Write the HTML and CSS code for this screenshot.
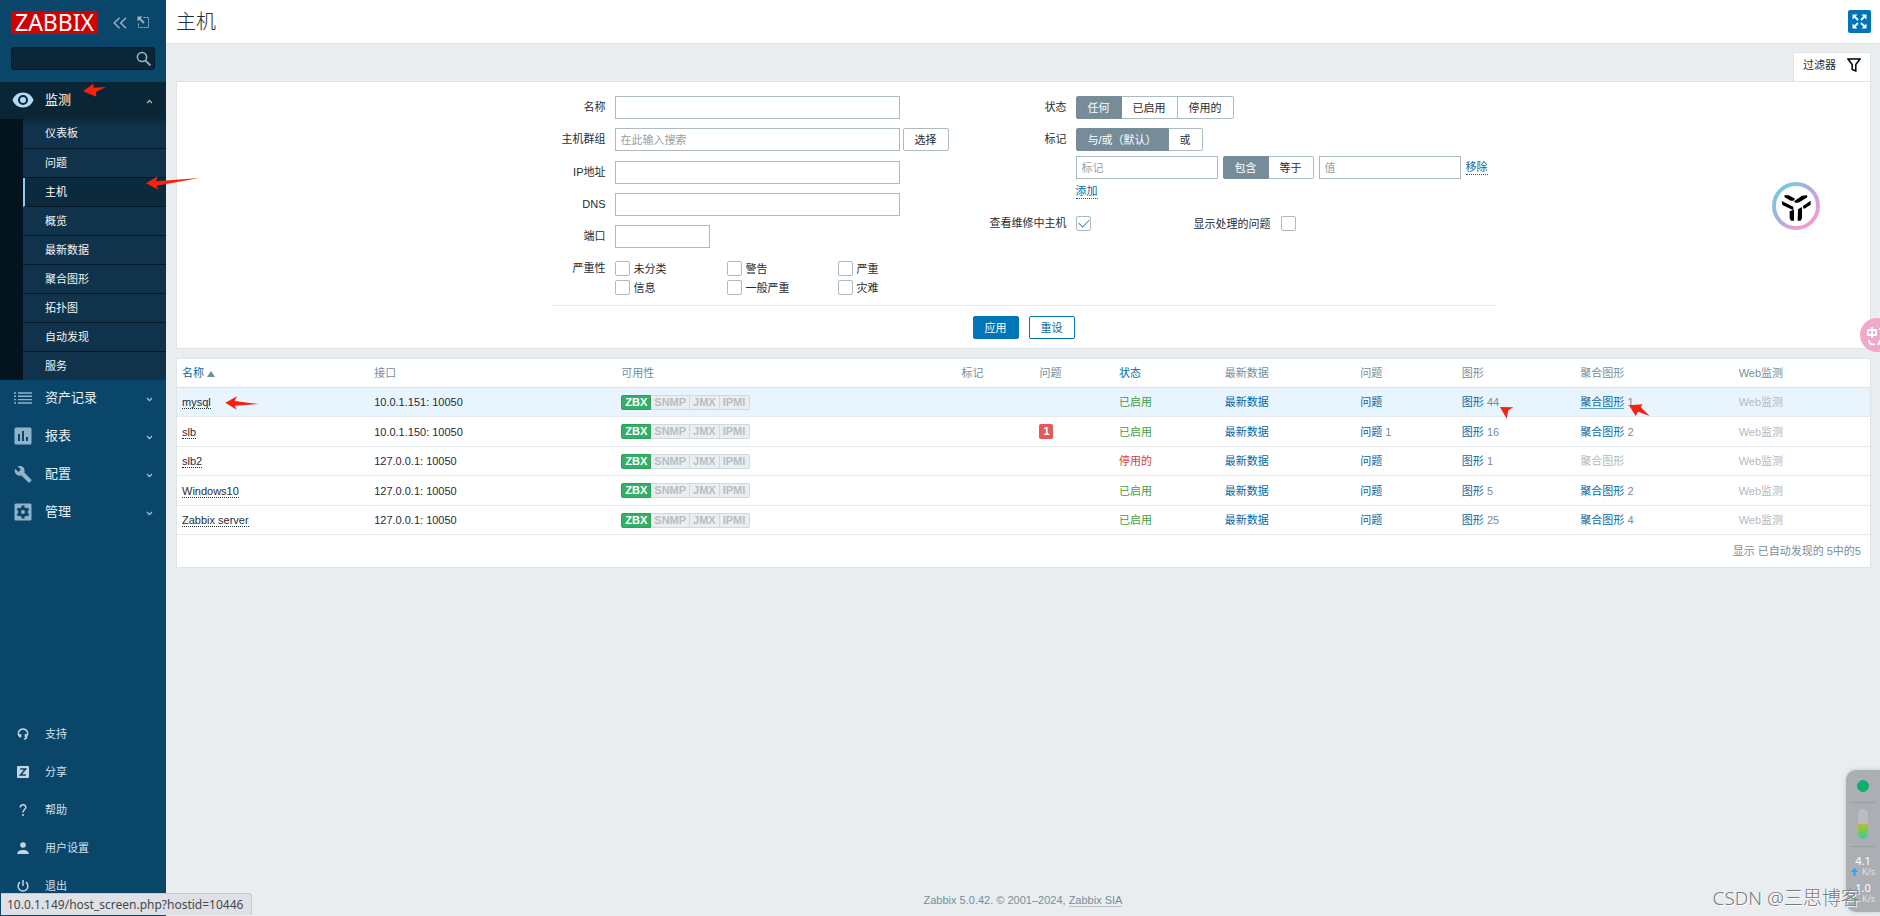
FILE: index.html
```
<!DOCTYPE html>
<html lang="zh-CN">
<head>
<meta charset="utf-8">
<title>主机</title>
<link rel="stylesheet" href="styles.css">
</head>
<body>
<aside class="sidebar">
  <div class="brand">
    <a class="logo" href="#">ZABBIX</a>
    <button class="ghost" type="button" aria-label="折叠"><svg width="14" height="12" viewBox="0 0 14 12" fill="none" stroke="currentColor" stroke-width="1.3"><path d="M6.5 .8 1.2 6l5.3 5.2M13 .8 7.7 6l5.3 5.2"/></svg></button>
    <button class="ghost" type="button" aria-label="隐藏"><svg width="13" height="13" viewBox="0 0 13 13" fill="none" stroke="currentColor"><path d="M6.500 1.500h5v10h-10v-5" stroke-dasharray="2 1"/><path d="M2 2l5 5" stroke-width="1.800"/><path d="M.5.5h5l-5 5z" fill="currentColor" stroke="none"/></svg></button>
  </div>
  <form class="search">
    <input type="text" aria-label="搜索">
    <button type="button" aria-label="搜索"><svg width="15" height="15" viewBox="0 0 15 15" fill="none" stroke="currentColor"><circle cx="6" cy="6" r="4.600" stroke-width="1.500"/><path d="m9.300 9.300 5 5" stroke-width="1.800"/></svg></button>
  </form>
  <nav class="menu">
    <a class="item open" href="#"><span class="icon"><svg width="22" height="16" viewBox="0 0 22 16"><path fill="currentColor" fill-rule="evenodd" d="M11 .500C6 .500 2 3.500.500 8 2 12.500 6 15.500 11 15.500S20 12.500 21.500 8C20 3.500 16 .500 11 .500zM11 13a5 5 0 1 1 0-10 5 5 0 0 1 0 10zm0-2a3 3 0 1 0 0-6 3 3 0 0 0 0 6z"/></svg></span><span class="text">监测</span><svg class="chev" width="7" height="5" viewBox="0 0 7 5"><path d="M1 4.200 3.500 1.500 6 4.200" fill="none" stroke="currentColor" stroke-width="1.200"/></svg></a>
    <div class="sub">
      <a href="#">仪表板</a><a href="#">问题</a><a class="current" href="#">主机</a><a href="#">概览</a><a href="#">最新数据</a><a href="#">聚合图形</a><a href="#">拓扑图</a><a href="#">自动发现</a><a href="#">服务</a>
    </div>
    <a class="item" href="#"><span class="icon"><svg width="18" height="12" viewBox="0 0 18 12" stroke="currentColor" stroke-width="1.400"><path d="M4 1h14M4 4.300h14M4 7.600h14M4 11h14M0 1h2M0 4.300h2M0 7.600h2M0 11h2"/></svg></span><span class="text">资产记录</span><svg class="chev" width="7" height="5" viewBox="0 0 7 5"><path d="M1 1 3.500 3.700 6 1" fill="none" stroke="currentColor" stroke-width="1.200"/></svg></a>
    <a class="item" href="#"><span class="icon"><svg width="18" height="18" viewBox="0 0 18 18"><path fill="currentColor" fill-rule="evenodd" d="M2 .500h14a1.500 1.500 0 0 1 1.500 1.500v14a1.500 1.500 0 0 1-1.500 1.500H2A1.500 1.500 0 0 1 .500 16V2A1.500 1.500 0 0 1 2 .500zM4 7v7h2V7zm4-3v10h2V4zm4 6v4h2v-4z"/></svg></span><span class="text">报表</span><svg class="chev" width="7" height="5" viewBox="0 0 7 5"><path d="M1 1 3.500 3.700 6 1" fill="none" stroke="currentColor" stroke-width="1.200"/></svg></a>
    <a class="item" href="#"><span class="icon"><svg width="18" height="18" viewBox="0 0 24 24"><path fill="currentColor" d="m23.200 19.500-9.400-9.400c.9-2.400.4-5.100-1.500-7C10.300 1.100 7.200.7 4.800 1.800L9.100 6.100 6 9.200 1.600 4.900C.4 7.300.9 10.400 2.900 12.400c1.900 1.900 4.600 2.400 7 1.500l9.400 9.300c.4.4 1 .4 1.400 0l2.400-2.300c.5-.4.5-1.100.1-1.400z"/></svg></span><span class="text">配置</span><svg class="chev" width="7" height="5" viewBox="0 0 7 5"><path d="M1 1 3.500 3.700 6 1" fill="none" stroke="currentColor" stroke-width="1.200"/></svg></a>
    <a class="item" href="#"><span class="icon"><svg width="18" height="18" viewBox="0 0 18 18"><rect x=".5" y=".5" width="17" height="17" rx="1.500" fill="currentColor"/><g fill="#0a466a"><circle cx="9" cy="9" r="4.800"/><path d="M7.500 2.500h3v13h-3zM2.700 7l1.500-2.600 11.100 6.500-1.500 2.600zM13.800 4.400 15.300 7 4.200 13.500 2.700 10.900z"/></g><circle cx="9" cy="9" r="2" fill="currentColor"/></svg></span><span class="text">管理</span><svg class="chev" width="7" height="5" viewBox="0 0 7 5"><path d="M1 1 3.500 3.700 6 1" fill="none" stroke="currentColor" stroke-width="1.200"/></svg></a>
  </nav>
  <nav class="menu lower">
    <a class="item" href="#"><span class="icon"><svg width="12" height="12" viewBox="0 0 12 12" fill="none" stroke="currentColor" stroke-width="1.400"><path d="M2.500 8.500C.5 6.500.9 1 6 1s5.500 5.500 3.500 7.500M9.500 8v2L7 11.300"/><path d="M3.300 6v3.500M8.700 6v3.500" stroke-width="2"/></svg></span><span class="text">支持</span></a>
    <a class="item" href="#"><span class="icon"><svg width="12" height="12" viewBox="0 0 12 12"><rect width="12" height="12" rx="1" fill="currentColor"/><path d="M3.200 3h5.400L3.500 9h5.400" fill="none" stroke="#0a466a" stroke-width="1.600"/></svg></span><span class="text">分享</span></a>
    <a class="item" href="#"><span class="icon"><svg width="8" height="12" viewBox="0 0 8 12" fill="none" stroke="currentColor" stroke-width="1.500"><path d="M1.200 3.500C1.200 0 6.800 0 6.800 3.300 6.800 5.500 4 5.500 4 8.500M4 10v2"/></svg></span><span class="text">帮助</span></a>
    <a class="item" href="#"><span class="icon"><svg width="12" height="12" viewBox="0 0 12 12" fill="currentColor"><circle cx="6" cy="3" r="2.800"/><path d="M.3 12C.3 9 2.500 8 6 8s5.700 1 5.700 4z"/></svg></span><span class="text">用户设置</span></a>
    <a class="item" href="#"><span class="icon"><svg width="12" height="12" viewBox="0 0 12 12" fill="none" stroke="currentColor" stroke-width="1.500"><path d="M6 0v6M3 2.200a4.900 4.900 0 1 0 6 0"/></svg></span><span class="text">退出</span></a>
  </nav>
</aside>

<div class="page">
  <header class="top">
    <h1>主机</h1>
    <button class="full" type="button" aria-label="全屏"><svg width="15" height="15" viewBox="0 0 15 15" fill="#fff" stroke="#fff"><path stroke="none" d="M.5.5h5l-5 5zM14.500.5v5l-5-5zM.5 14.500v-5l5 5zM14.500 14.500h-5l5-5z"/><path stroke-width="1.800" d="m2 2 4 4M13 2 9 6M2 13l4-4M13 13 9 9"/></svg></button>
  </header>
  <main>
    <div class="tabs"><button class="tab" type="button">过滤器<svg width="14" height="14" viewBox="0 0 14 14" fill="none" stroke="#000" stroke-width="1.500"><path d="M1 1h12L8.800 6.500V13L5.200 11.500v-5z"/></svg></button></div>
    <form class="panel filter">
      <div class="cols">
        <div class="left">
          <label for="f-name">名称</label><div><input id="f-name" class="wide" type="text"></div>
          <label for="f-group">主机群组</label><div class="pair"><input id="f-group" class="wide" type="text" placeholder="在此输入搜索"><button class="plain" type="button">选择</button></div>
          <label for="f-ip">IP地址</label><div><input id="f-ip" class="wide" type="text"></div>
          <label for="f-dns">DNS</label><div><input id="f-dns" class="wide" type="text"></div>
          <label for="f-port">端口</label><div><input id="f-port" class="short" type="text"></div>
          <span class="caption">严重性</span>
          <div class="severity">
            <label><input type="checkbox">未分类</label><label><input type="checkbox">警告</label><label><input type="checkbox">严重</label>
            <label><input type="checkbox">信息</label><label><input type="checkbox">一般严重</label><label><input type="checkbox">灾难</label>
          </div>
        </div>
        <div class="right">
          <span class="caption">状态</span>
          <div class="seg"><label><input type="radio" name="status" checked><span>任何</span></label><label><input type="radio" name="status"><span>已启用</span></label><label><input type="radio" name="status"><span>停用的</span></label></div>
          <span class="caption">标记</span>
          <div class="tags">
            <div class="seg"><label><input type="radio" name="evaltype" checked><span>与/或（默认）</span></label><label><input type="radio" name="evaltype"><span>或</span></label></div>
            <div class="tagrow"><input class="tag" type="text" placeholder="标记" aria-label="标记"><div class="seg"><label><input type="radio" name="op" checked><span>包含</span></label><label><input type="radio" name="op"><span>等于</span></label></div><input class="tag" type="text" placeholder="值" aria-label="值"><a class="dotted" href="#">移除</a></div>
            <div><a class="dotted" href="#">添加</a></div>
          </div>
          <label for="f-maint">查看维修中主机</label>
          <div class="checks"><input id="f-maint" type="checkbox" checked><label for="f-supp">显示处理的问题</label><input id="f-supp" type="checkbox"></div>
        </div>
      </div>
      <div class="actions"><button class="primary" type="button">应用</button><button class="outline" type="button">重设</button></div>
    </form>

    <section class="panel list">
      <table>
        <colgroup><col class="c1"><col class="c2"><col class="c3"><col class="c4"><col class="c5"><col class="c6"><col class="c7"><col class="c8"><col class="c9"><col class="c10"><col></colgroup>
        <thead><tr><th><a href="#">名称<i class="sort"></i></a></th><th>接口</th><th>可用性</th><th>标记</th><th>问题</th><th><a href="#">状态</a></th><th>最新数据</th><th>问题</th><th>图形</th><th>聚合图形</th><th>Web监测</th></tr></thead>
        <tbody>
          <tr class="hover"><td><a class="host" href="#">mysql</a></td><td>10.0.1.151: 10050</td><td><div class="avail"><span class="on">ZBX</span><span>SNMP</span><span>JMX</span><span>IPMI</span></div></td><td></td><td></td><td><a class="ok" href="#">已启用</a></td><td><a href="#">最新数据</a></td><td><a href="#">问题</a></td><td><a href="#">图形</a> <small>44</small></td><td><a class="under" href="#">聚合图形</a> <small>1</small></td><td class="off">Web监测</td></tr>
          <tr><td><a class="host" href="#">slb</a></td><td>10.0.1.150: 10050</td><td><div class="avail"><span class="on">ZBX</span><span>SNMP</span><span>JMX</span><span>IPMI</span></div></td><td></td><td><a class="count" href="#">1</a></td><td><a class="ok" href="#">已启用</a></td><td><a href="#">最新数据</a></td><td><a href="#">问题</a> <small>1</small></td><td><a href="#">图形</a> <small>16</small></td><td><a href="#">聚合图形</a> <small>2</small></td><td class="off">Web监测</td></tr>
          <tr><td><a class="host" href="#">slb2</a></td><td>127.0.0.1: 10050</td><td><div class="avail"><span class="on">ZBX</span><span>SNMP</span><span>JMX</span><span>IPMI</span></div></td><td></td><td></td><td><a class="bad" href="#">停用的</a></td><td><a href="#">最新数据</a></td><td><a href="#">问题</a></td><td><a href="#">图形</a> <small>1</small></td><td class="off">聚合图形</td><td class="off">Web监测</td></tr>
          <tr><td><a class="host" href="#">Windows10</a></td><td>127.0.0.1: 10050</td><td><div class="avail"><span class="on">ZBX</span><span>SNMP</span><span>JMX</span><span>IPMI</span></div></td><td></td><td></td><td><a class="ok" href="#">已启用</a></td><td><a href="#">最新数据</a></td><td><a href="#">问题</a></td><td><a href="#">图形</a> <small>5</small></td><td><a href="#">聚合图形</a> <small>2</small></td><td class="off">Web监测</td></tr>
          <tr><td><a class="host" href="#">Zabbix server</a></td><td>127.0.0.1: 10050</td><td><div class="avail"><span class="on">ZBX</span><span>SNMP</span><span>JMX</span><span>IPMI</span></div></td><td></td><td></td><td><a class="ok" href="#">已启用</a></td><td><a href="#">最新数据</a></td><td><a href="#">问题</a></td><td><a href="#">图形</a> <small>25</small></td><td><a href="#">聚合图形</a> <small>4</small></td><td class="off">Web监测</td></tr>
        </tbody>
      </table>
      <div class="summary">显示 已自动发现的 5中的5</div>
    </section>
  </main>
  <footer>Zabbix 5.0.42. © 2001–2024, <a href="#">Zabbix SIA</a></footer>
</div>

<svg class="mark m1" width="24" height="14" viewBox="250 250 72 42"><path d="M250 275 281 252 282 264 319 262 289 277 290 291z"/></svg>
<svg class="mark m2" width="54" height="14" viewBox="438 528 162 42"><path d="M438 550 473 529 468 544 598 534 470 557 475 569z"/></svg>
<svg class="mark m3" width="34" height="14" viewBox="675 589 102 42"><path d="M676 609 711 590 704 604 777 613 704 618 710 630z"/></svg>
<svg class="mark m4" width="14" height="12" viewBox="300 171 42 36"><path d="M300 171 340 172 325 181 320 206z"/></svg>
<svg class="mark m5" width="21" height="12" viewBox="687 161 63 36"><path d="M687 165 728 162 722 170 749 197 714 184 707 197z"/></svg>

<svg class="orb" width="48" height="48" viewBox="0 0 144 144">
  <defs><linearGradient id="ring" x1="0" y1="0" x2="1" y2="1"><stop offset=".15" stop-color="#7ac8da"/><stop offset=".5" stop-color="#b3aae4"/><stop offset=".8" stop-color="#eb9fcd"/></linearGradient></defs>
  <circle cx="72" cy="72" r="66" fill="#fff" stroke="url(#ring)" stroke-width="12"/>
  <path d="M37 40h13l19 10-4 6h-9L38 46zM66 58l24-17 15-1 1 6-24 15-11 2zM29 57l35 17v11L31 69zM116 56v12L96 81l-4-8zM53 88l13-5v33h-9l-4-7zM78 82l12-7v33l-4 8h-9z"/>
</svg>
<div class="ime"><svg width="34" height="34" viewBox="0 0 34 34" fill="none" stroke="#fff" stroke-width="1.800"><path d="M8 12h8v5H8zM12 9v11M19 11h9M23 11v5M9 22c0 4 2 5 6 4M23 17l-5 10"/></svg></div>
<div class="net"><i class="dot"></i><hr><i class="gauge"></i><hr><b>4.1</b><span><svg width="7" height="8" viewBox="0 0 7 8"><path fill="#22a7f0" d="M3.500 0 7 4H4.500v4h-2V4H0z"/></svg>K/s</span><b>1.0</b><span><svg width="7" height="8" viewBox="0 0 7 8"><path fill="#1fbf6b" d="M3.500 8 7 4H4.500V0h-2v4H0z"/></svg>K/s</span></div>
<div class="watermark">CSDN @三思博客</div>
<div class="statusbar">10.0.1.149/host_screen.php?hostid=10446</div>
</body>
</html>
```

FILE: styles.css
```
* { box-sizing: border-box; }
body { margin: 0; min-height: 100vh; display: flex; position: relative; overflow: hidden; background: #e9edf0; color: #1f2c33; font: 11px/14px "Liberation Sans", "Noto Sans CJK SC", sans-serif; }
a { color: #0a66a2; text-decoration: none; }
input, button { font: inherit; color: inherit; margin: 0; }
button { padding: 0; border: 0; background: none; display: flex; align-items: center; justify-content: center; }

.sidebar { width: 166px; flex: none; min-height: 100vh; display: flex; flex-direction: column; background: #0a466a; padding-bottom: 12px; }
.brand { display: flex; align-items: center; padding: 11px 16px 0 11px; height: 34px; color: #9ab9cc; }
.logo { width: 87px; height: 23px; margin-right: 15px; background: #d40000; color: #fff; font-size: 23px; line-height: 23px; text-align: center; font-family: "Noto Sans", sans-serif; }
.ghost + .ghost { margin-left: 10px; }
.search { display: flex; margin: 13px 11px 12px; height: 23px; border: 1px solid #061c29; border-radius: 3px; background: #0b2637; color: #9ab9cc; }
.search input { flex: 1; min-width: 0; border: 0; background: none; outline: 0; }
.search button { width: 22px; }
.menu { display: flex; flex-direction: column; gap: 1px; }
.item { display: flex; align-items: center; height: 37px; padding: 0 13px 2px 0; color: #e8f1f7; font-size: 13px; }
.icon { width: 45px; display: flex; justify-content: center; color: #8fb3cb; }
.text { flex: 1; }
.chev { color: #a9c4d5; margin-top: 3px; }
.open { background: #0a2535; color: #fff; margin-bottom: -1px; }
.open .icon { color: #b5dbf3; }
.sub { padding-left: 23px; margin-bottom: -1px; background: #03141e; }
.sub a { display: block; height: 29px; padding-left: 22px; line-height: 29px; background: #10334b; border-bottom: 1px solid #041825; color: #f0f5f8; }
.sub a:first-child { height: 30px; background: linear-gradient(#0c2a3e, #10334b 8px); }
.sub a:last-child { height: 28px; border-bottom-color: #10334b; }
.sub .current { border-left: 2px solid #8ecbf2; padding-left: 20px; background: #0b2a3e; color: #fff; }
.lower { margin-top: auto; }
.lower .item { font-size: 11px; color: #d0e0ea; padding-bottom: 0; }
.lower .icon { color: #c3d6e2; }

.page { flex: 1; min-width: 0; display: flex; flex-direction: column; }
.top { display: flex; align-items: center; justify-content: space-between; height: 44px; padding: 0 9px 0 10px; background: #fff; border-bottom: 1px solid #dfe4e7; }
h1 { margin: 0; font-size: 20px; line-height: 24px; font-weight: 300; }
.full { width: 23px; height: 23px; background: #0275b8; border-radius: 2px; }
main { padding: 8px 9px 0 10px; }
.tabs { display: flex; justify-content: flex-end; }
.tab { height: 29px; gap: 11px; padding: 0 9px 4px; background: #fff; border: 1px solid #dfe4e7; border-bottom: 0; }
.panel { background: #fff; border: 1px solid #dfe4e7; }
.filter { padding: 14px 10px 9px; }
.cols { max-width: 946px; margin: 0 auto; display: grid; grid-template-columns: 436px 1fr; border-bottom: 1px solid #e6eaec; padding-bottom: 10px; }
.left, .right { display: grid; column-gap: 9px; row-gap: 9px; align-content: start; }
.left { grid-template-columns: 55px 1fr; }
.right { grid-template-columns: 80px 1fr; }
.left > label, .right > label, .caption { text-align: right; line-height: 23px; white-space: nowrap; }
input[type=text]:not(.search input) { height: 23px; padding: 0 5px; border: 1px solid #acbbc2; background: #fff; display: block; }
input::placeholder { color: #9a9fa3; opacity: 1; }
.filter .wide { width: 285px; }
.filter .short { width: 95px; }
.pair { display: flex; gap: 3px; padding-bottom: 1px; }
.plain { width: 46px; height: 23px; border: 1px solid #acbbc2; border-radius: 2px; }
.severity { display: grid; grid-template-columns: 112px 111px 1fr; row-gap: 4px; padding-top: 4px; }
.severity label { display: flex; align-items: center; gap: 4px; height: 15px; white-space: nowrap; }
input[type=checkbox] { appearance: none; flex: none; width: 15px; height: 15px; border: 1px solid #acbbc2; border-radius: 2px; background: #fff; }
input[type=checkbox]:checked { position: relative; }
input[type=checkbox]:checked::after { content: ""; position: absolute; left: 2px; top: 2px; width: 9px; height: 5px; border: solid #3d8fc6; border-width: 0 0 1px 1px; transform: rotate(-45deg); }
.seg { display: flex; height: 23px; }
.seg label { position: relative; display: flex; }
.seg input { position: absolute; opacity: 0; margin: 0; }
.seg span { display: flex; align-items: center; padding: 0 11px; border: 1px solid #acbbc2; border-left-width: 0; white-space: nowrap; background: #fff; }
.seg label:first-child span { border-left-width: 1px; border-radius: 2px 0 0 2px; }
.seg label:last-child span { border-radius: 0 2px 2px 0; }
.seg input:checked + span { background: #768d99; border-color: #768d99; color: #fff; }
.tags { display: grid; row-gap: 5px; padding-bottom: 4px; }
.tagrow { display: flex; align-items: center; gap: 5px; }
.filter .tag { width: 142px; }
.dotted { border-bottom: 1px dotted #0a66a2; line-height: 14px; display: inline-block; }
.checks { display: flex; align-items: center; gap: 10px; }
.checks label { margin-left: 93px; }
.actions { display: flex; justify-content: center; gap: 10px; padding-top: 10px; }
.actions button { width: 46px; height: 23px; border: 1px solid #0275b8; border-radius: 2px; color: #0a66a2; }
.actions .primary { background: #0275b8; color: #fff; }

.list { margin-top: 9px; }
table { width: 100%; border-collapse: separate; border-spacing: 0; table-layout: fixed; }
.c1 { width: 11.35%; } .c2 { width: 14.6%; } .c3 { width: 20.1%; } .c4 { width: 4.6%; } .c5 { width: 4.7%; }
.c6 { width: 6.25%; } .c7 { width: 8%; } .c8 { width: 6%; } .c9 { width: 7%; } .c10 { width: 9.35%; }
th, td { height: 29px; padding: 0 5px; text-align: left; font-weight: 400; border-bottom: 1px solid #e6eaec; white-space: nowrap; }
tr:nth-child(even) td { height: 30px; }
th { color: #768d99; border-bottom-color: #dbe1e5; }
.sort { display: inline-block; margin-left: 3px; border: solid transparent; border-width: 0 4px 6px; border-bottom-color: #768d99; }
.hover td { background: #e8f5ff; }
.host { color: #1f2c33; border-bottom: 1px dotted #1f2c33; }
.ok { color: #429e47; }
.bad { color: #d23d3d; }
.under { border-bottom: 1px solid #5f9dc6; }
.off { color: #b5b9bc; }
small { font-size: 11px; color: #768d99; }
.count { display: block; width: 14px; height: 15px; line-height: 15px; text-align: center; border-radius: 2px; background: #e45959; color: #fff; font-weight: 700; }
.avail { display: flex; font-weight: 700; line-height: 13px; }
.avail span { padding: 0 3px; color: #b4bfc4; background: #ebeef0; border: 1px solid #d2d9dc; border-left-width: 0; }
.avail span:last-child { padding-right: 4px; border-radius: 0 2px 2px 0; }
.avail .on { color: #fff; background: #34af67; border: 1px solid #2f9f5e; border-radius: 2px 0 0 2px; }
.summary { padding: 9px; text-align: right; color: #768d99; }
footer { margin-top: auto; padding-bottom: 9px; text-align: center; color: #768d99; }
footer a { color: #768d99; border-bottom: 1px solid #b9c4ca; }

.mark { position: absolute; fill: #f9200f; pointer-events: none; }
.m1 { left: 83px; top: 83px; }
.m2 { left: 146px; top: 176px; }
.m3 { left: 225px; top: 396px; }
.m4 { left: 1500px; top: 407px; }
.m5 { left: 1629px; top: 404px; }
.orb { position: absolute; right: 60px; top: 182px; }
.ime { position: absolute; right: -14px; top: 318px; width: 34px; height: 34px; border-radius: 50%; background: #f0a9c8; }
.net { position: absolute; right: 0; bottom: 4px; width: 34px; height: 142px; border-radius: 10px 0 0 10px; background: #abafb4; box-shadow: 0 0 4px #c3c8cc; color: #fff; display: flex; flex-direction: column; align-items: center; padding-top: 10px; font-family: "Noto Sans", sans-serif; font-size: 11px; line-height: 11px; }
.net hr { width: 26px; margin: 10px 0 6px; border: 0; border-top: 1px solid #9a9fa5; }
.dot { width: 12px; height: 12px; border-radius: 50%; background: #04b566; border: 1px solid #2b9d88; }
.gauge { width: 10px; height: 30px; border-radius: 5px; background: linear-gradient(#b9bcc0 50%, #b9b83c 50%, #7ecb45 70%, #45c5b0); }
.net hr + b { margin-top: 2px; }
.net b { font-weight: 400; margin-top: 5px; }
.net span { display: flex; align-items: center; gap: 4px; font-size: 9px; color: #e0e2e4; }
.gauge + hr { margin-top: 7px; }
.watermark { position: absolute; right: 20px; bottom: 5px; font: 300 19px/26px "Noto Sans", "Noto Sans CJK SC", sans-serif; color: #777c80; text-shadow: 1px 1px 0 #fff; }
.statusbar { position: absolute; left: 1px; bottom: 1px; height: 22px; padding: 0 8px 0 6px; border: 1px solid #c6cacd; border-left: 0; border-bottom: 0; border-radius: 0 4px 0 0; background: #dee1e6; color: #45494d; font: 12px/22px "Noto Sans", sans-serif; }
```
